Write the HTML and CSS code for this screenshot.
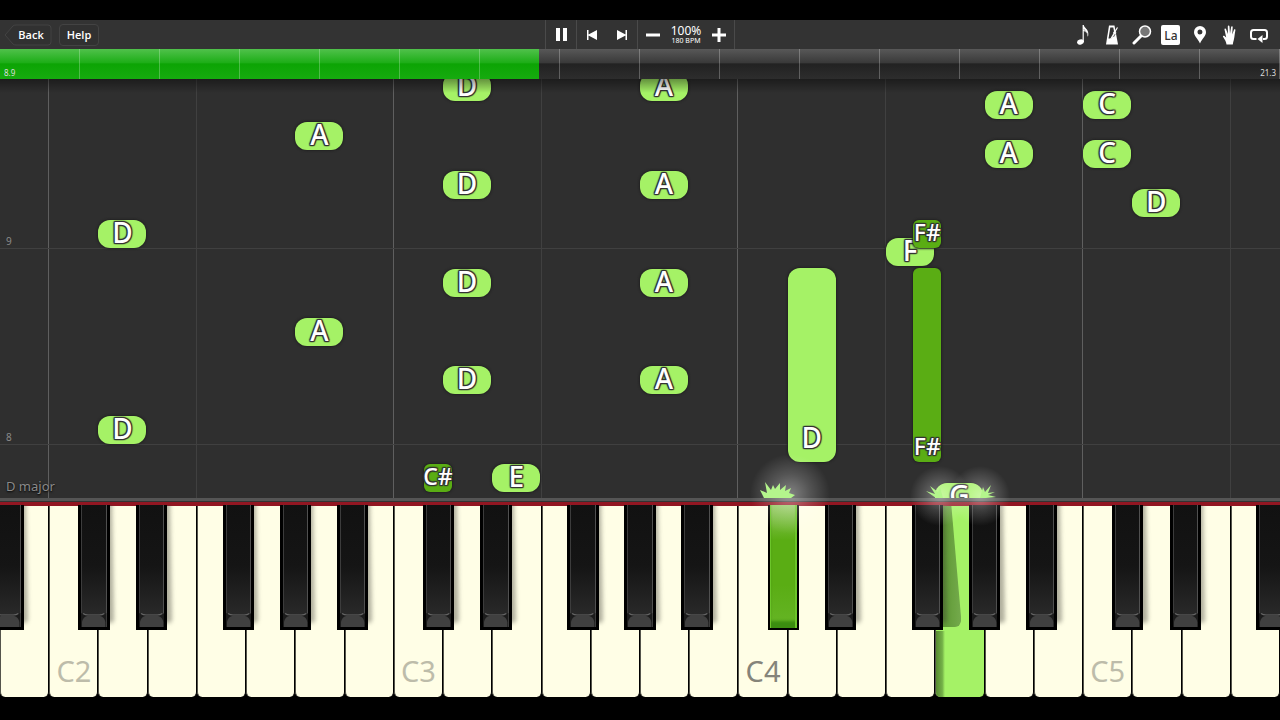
FILE: index.html
```html
<!DOCTYPE html>
<html lang="en">
<head>
  <meta charset="UTF-8">
  <meta name="viewport" content="width=device-width, initial-scale=1">
  <title>Piano Player</title>
  <link rel="stylesheet" href="styles.css">
</head>
<body>

<!-- TOOLBAR -->
<header class="toolbar">
  <nav class="menu">
    <button class="menu-btn back-btn">
      <svg class="back-shape" viewBox="0 0 48 22" aria-hidden="true"><path d="M1 11 L9 2 Q10 1 12 1 H44 Q47 1 47 4 V18 Q47 21 44 21 H12 Q10 21 9 20 Z"/></svg>
      <span>Back</span>
    </button>
    <button class="menu-btn help-btn">Help</button>
  </nav>

  <div class="transport">
    <div class="group">
      <button class="icon-btn" aria-label="Pause">
        <svg width="12" height="14" viewBox="0 0 12 14"><path d="M1 0h4v13H1zM8 0h4v13H8z"/></svg>
      </button>
    </div>
    <div class="group">
      <button class="icon-btn" aria-label="Previous">
        <svg width="12" height="10" viewBox="0 0 12 10"><path d="M1 0h1.500v4.500L11 0v10L2.500 5.500V10H1z"/></svg>
      </button>
      <button class="icon-btn" aria-label="Next">
        <svg width="12" height="10" viewBox="0 0 12 10"><path d="M11 0H9.500v4.500L1 0v10l8.500-4.500V10H11z"/></svg>
      </button>
    </div>
    <div class="group tempo">
      <button class="icon-btn" aria-label="Slower">
        <svg width="14" height="14" viewBox="0 0 14 14"><path d="M0 5.500h14v3H0z"/></svg>
      </button>
      <div class="tempo-value">
        <span class="percent">100%</span>
        <span class="bpm">180 BPM</span>
      </div>
      <button class="icon-btn" aria-label="Faster">
        <svg width="14" height="14" viewBox="0 0 14 14"><path d="M5.500 0h3v5.500H14v3H8.500V14h-3V8.500H0v-3h5.500z"/></svg>
      </button>
    </div>
  </div>

  <div class="tools">
    <button class="icon-btn" aria-label="Notes">
      <svg width="20" height="20" viewBox="0 0 20 20"><ellipse cx="7.500" cy="17" rx="3.500" ry="2.600" transform="rotate(-18 7.500 17)"/><path d="M9.600 0h1.200c.3 3 4.500 4 4.500 8.500 0 1.500-.5 2.600-1 3.300.6-2.700-.6-4.600-3.500-5.800V17H9.600z"/><path d="M10.800 4c.8 2.600 4.700 3.500 4.200 7" fill="none" stroke="#999" stroke-width=".8"/></svg>
    </button>
    <button class="icon-btn" aria-label="Metronome">
      <svg width="20" height="20" viewBox="0 0 20 20"><path d="M7 .5h5.500L16 19.500H4z"/><path d="M8.300 2.500h3l.9 5-2.500 6H6.500z" fill="#333"/><path d="M15.500 2.500 8.500 14.500" stroke="#fff" stroke-width="1.300"/><path d="M16.500 3 11.500 12" stroke="#333" stroke-width=".7"/><path d="m11.500 7 2.500 1.500" stroke="#fff" stroke-width="2"/></svg>
    </button>
    <button class="icon-btn" aria-label="Zoom">
      <svg width="20" height="20" viewBox="0 0 20 20"><path d="M9 11 2 18" stroke="#fff" stroke-width="3" stroke-linecap="round"/><circle cx="13" cy="6.500" r="5.500" fill="#777" stroke="#fff" stroke-width="1.500"/></svg>
    </button>
    <button class="icon-btn" aria-label="Note labels"><span class="la">La</span></button>
    <button class="icon-btn" aria-label="Bookmark">
      <svg width="20" height="20" viewBox="0 0 20 20"><path fill-rule="evenodd" d="M10 1a6 6 0 0 1 6 6c0 4-3.500 6-6 11.500C7.500 13 4 11 4 7a6 6 0 0 1 6-6zm0 3.500a2.500 2.500 0 1 0 0 5 2.500 2.500 0 0 0 0-5z"/></svg>
    </button>
    <button class="icon-btn" aria-label="Hands">
      <svg width="20" height="20" viewBox="0 0 20 20"><path d="M6.500 19.500C6.300 17 5 15 3 11.800c-.4-.9.8-1.500 1.500-.8l1.700 1.600L4.500 4.500c-.1-1 1.200-1.300 1.500-.4L7.900 9 7.800 1.500c0-1.200 1.600-1.200 1.700 0l.5 7.300 1.100-6.800c.2-1.100 1.700-.9 1.600.2l-.5 7.300 1.800-4.700c.4-.9 1.600-.5 1.400.5-1 5-.7 6.500-1.600 9.700-.4 1.500-.9 3-1 4.500z"/></svg>
    </button>
    <button class="icon-btn" aria-label="Loop">
      <svg width="20" height="20" viewBox="0 0 20 20"><path d="M7.500 14H4.500Q2 14 2 11.500V7.500Q2 5 4.500 5h11Q18 5 18 7.500v4q0 2.500-2.500 2.500H14" fill="none" stroke="#fff" stroke-width="2"/><path d="m8.500 14 5-4v8z"/></svg>
    </button>
  </div>
</header>

<!-- SONG POSITION -->
<div class="seek" role="progressbar" aria-label="Song position" aria-valuemin="0" aria-valuemax="21.3" aria-valuenow="8.9">
  <div class="seek-done" style="width: 42.1%"></div>
  <span class="seek-time">8.9</span>
  <span class="seek-time">21.3</span>
</div>

<main class="stage">
  <!-- FALLING NOTES -->
  <div class="roll" id="roll">
    <span class="song-key">D major</span>
  </div>

  <!-- KEYBOARD -->
  <div class="rail"></div>
  <div class="felt"></div>
  <div class="piano" id="piano">
    <div class="white-keys" id="whiteKeys"></div>
    <div class="black-keys" id="blackKeys"></div>
  </div>
</main>

<script>
  const WHITE_COUNT = 26;
  const FIRST_C = 1;   // the keyboard starts on B1

  // left edge of each black key, in white keys from C
  const blackOffsets = [0.59, 1.76, 3.52, 4.68, 5.84];

  // x = white key index, y = distance above the keyboard, h = length
  const notes = [
    { name: "D", x: 2, y: 54 },
    { name: "D", x: 2, y: 250 },
    { name: "A", x: 6, y: 152 },
    { name: "A", x: 6, y: 348 },
    { name: "D", x: 9, y: 104 },
    { name: "D", x: 9, y: 201 },
    { name: "D", x: 9, y: 299 },
    { name: "D", x: 9, y: 397 },
    { name: "A", x: 13, y: 104 },
    { name: "A", x: 13, y: 201 },
    { name: "A", x: 13, y: 299 },
    { name: "A", x: 13, y: 397 },
    { name: "C#", x: 8.61, y: 6, black: true },
    { name: "E", x: 10, y: 6 },
    { name: "D", x: 16, y: 36, h: 194 },
    { name: "F", x: 18, y: 232 },
    { name: "F#", x: 18.55, y: 250, black: true },
    { name: "F#", x: 18.55, y: 36, h: 194, black: true },
    { name: "G", x: 19, y: -13 },
    { name: "A", x: 20, y: 330 },
    { name: "A", x: 20, y: 379 },
    { name: "C", x: 22, y: 330 },
    { name: "C", x: 22, y: 379 },
    { name: "D", x: 23, y: 281 }
  ];

  const beats = [{ n: 8, y: 53 }, { n: 9, y: 249 }];
  const pressedWhite = 19;
  const pressedBlack = 15.59;

  const roll = document.getElementById("roll");
  const piano = document.getElementById("piano");
  const whiteKeys = document.getElementById("whiteKeys");
  const blackKeys = document.getElementById("blackKeys");

  function left(x) {
    return (x / WHITE_COUNT * 100).toFixed(3) + "%";
  }

  function add(parent, className, x, html = "") {
    const div = document.createElement("div");
    div.className = className;
    if (x !== null) div.style.left = left(x);
    div.innerHTML = html;
    parent.appendChild(div);
    return div;
  }

  // guide lines on every C and F
  for (let i = 0; i < WHITE_COUNT; i++) {
    const step = (i + 7 - FIRST_C) % 7;
    if (step === 0) add(roll, "line line-c", i);
    if (step === 3) add(roll, "line line-f", i);
  }

  beats.forEach(b => {
    add(roll, "beat", null, `<span>${b.n}</span>`).style.bottom = b.y + "px";
  });

  notes.forEach(n => {
    let name = "note";
    if (n.black) name += " note-black";
    else if (n.h) name += " note-long";
    const div = add(roll, name, n.x, `<span>${n.name}</span>`);
    div.style.bottom = n.y + "px";
    if (n.h) div.style.height = n.h + "px";
  });

  // white keys
  for (let i = 0; i < WHITE_COUNT; i++) {
    const isC = (i + 7 - FIRST_C) % 7 === 0;
    const octave = 2 + (i - FIRST_C) / 7;
    let name = "white-key";
    if (i === pressedWhite) name += " pressed";
    if (octave === 4) name += " middle-c";
    add(whiteKeys, name, null, isC ? `<span>C${octave}</span>` : "");
  }

  // black keys
  for (let c = FIRST_C - 7; c < WHITE_COUNT; c += 7) {
    blackOffsets.forEach(o => {
      const x = c + o;
      if (x < -0.6 || x > WHITE_COUNT) return;
      const pressed = Math.abs(x - pressedBlack) < 0.01;
      const cap = pressed ? "" : `<svg class="cap" viewBox="0 0 25 14" preserveAspectRatio="none"><path d="M0 0 4 2H21L25 0V14H0z" fill="#1b1b1b"/><path d="M1 14V9Q2 4 6 3H19Q23 4 24 9V14z" fill="#404040"/><path d="M2 .5Q4 2 7 2H18Q21 2 23 .5" fill="none" stroke="#666"/></svg>`;
      add(blackKeys, pressed ? "black-key pressed" : "black-key", x, `<div class="key-shadow"></div><div class="black-top">${cap}</div>`);
    });
  }

  // sparks and glow where a note meets its key
  const blades = `<path d="M4 16 0 8 7 11 5 0 11 8 13 3 15 7 20 1 20 8 26 3 25 9 31 6 29 11 35 13 31 16z"/>`;
  add(roll, "sparks", 15.43, `<svg width="36" height="16" viewBox="0 0 36 16">${blades}</svg>`);
  add(roll, "sparks", 18.8, `<svg width="70" height="16" viewBox="0 0 70 16"><path d="M10 16 0 9 9 12 4 4 12 10 14 5 17 16zM54 16 57 5 59 10 65 3 62 11 69 10 62 13 70 15 60 16z"/></svg>`);
  add(piano, "glow glow-big", 16.05);
  add(piano, "glow", 19.1);
  add(piano, "glow", 19.9);
</script>

</body>
</html>
```

FILE: styles.css
```css
* {
  box-sizing: border-box;
}

body {
  margin: 0;
  padding: 20px 0 24px;
  min-height: 100vh;
  display: flex;
  flex-direction: column;
  background: #000;
  color: white;
  font-family: "Noto Sans", "Open Sans", sans-serif;
  overflow-x: hidden;
}

button {
  margin: 0;
  padding: 0;
  background: none;
  border: none;
  color: inherit;
  font-family: inherit;
  cursor: pointer;
}

svg {
  display: block;
  fill: white;
}

/* toolbar */
.toolbar {
  height: 29px;
  display: grid;
  grid-template-columns: 1fr auto 1fr;
  background: #333;
}

.menu {
  display: flex;
  align-items: center;
  gap: 7px;
  padding-left: 4px;
}

.menu-btn {
  height: 22px;
  font-family: "Open Sans", sans-serif;
  font-size: 11px;
  font-weight: 600;
}

.back-btn {
  display: grid;
  width: 48px;
  align-items: center;
}

.back-btn > * {
  grid-area: 1 / 1;
}

.back-btn span {
  padding-left: 6px;
}

.back-shape path {
  fill: #313131;
  stroke: #434343;
}

.help-btn {
  width: 40px;
  border: 1px solid #434343;
  border-radius: 4px;
  background: #313131;
}

.transport {
  display: flex;
}

.group {
  display: flex;
  align-items: center;
  border-left: 1px solid #4a4a4a;
}

.icon-btn {
  width: 30px;
  height: 29px;
  display: flex;
  align-items: center;
  justify-content: center;
}

.tempo {
  border-right: 1px solid #4a4a4a;
}

.tempo-value {
  width: 36px;
  display: flex;
  flex-direction: column;
  align-items: center;
  white-space: nowrap;
}

.percent {
  font-size: 12px;
  line-height: 13px;
}

.bpm {
  font-size: 7px;
  line-height: 8px;
}

.tools {
  width: 206px;
  justify-self: end;
  margin-right: 6px;
  display: grid;
  grid-template-columns: repeat(7, 1fr);
}

.tools .icon-btn {
  width: auto;
}

.la {
  width: 19px;
  height: 20px;
  border-radius: 2px;
  background: white;
  color: #333;
  font-size: 12px;
  font-weight: 500;
  line-height: 22px;
}

/* song position */
.seek {
  height: 30px;
  display: flex;
  position: relative;
  align-items: flex-end;
  justify-content: space-between;
  padding: 0 4px 1px;
  background: linear-gradient(#585858, #3a3a3a 45%, #222 50%, #2d2d2d);
}

.seek-done {
  position: absolute;
  top: 0;
  bottom: 0;
  left: 0;
  background: linear-gradient(#50c14b, #1eae18 45%, #0ca404 50%, #16ab0f);
}

/* one tick every 1/16 of the song */
.seek::after {
  content: "";
  position: absolute;
  inset: 0;
  background: linear-gradient(to left, rgba(255, 255, 255, 0.25) 1px, transparent 1px) 0 0 / 6.25% 100%;
}

.seek-time {
  position: relative;
  color: #ddd;
  font-size: 8px;
  line-height: 10px;
}

/* falling notes */
.stage {
  flex: 1;
  display: flex;
  flex-direction: column;
}

.roll {
  flex: 1;
  min-height: 419px;
  position: relative;
  overflow: hidden;
  background: #2f2f2f;
}

.roll::before {
  content: "";
  position: absolute;
  inset: 0 0 auto 0;
  z-index: 2;
  height: 14px;
  background: linear-gradient(rgba(0, 0, 0, 0.4), transparent);
}

.line {
  position: absolute;
  top: 0;
  bottom: 0;
  width: 1px;
  margin-left: -1px;
}

.line-c {
  background: #5f5f5f;
}

.line-f {
  background: #404040;
}

.beat {
  position: absolute;
  left: 0;
  right: 0;
  border-top: 1px solid #404040;
}

.beat span {
  position: absolute;
  left: 6px;
  bottom: 2px;
  color: #8a8a8a;
  font-size: 10px;
  line-height: 12px;
}

.song-key {
  position: absolute;
  left: 6px;
  bottom: 4px;
  z-index: 1;
  color: #8a8a8a;
  font-size: 13px;
  line-height: 16px;
  text-shadow: 0 1px 2px #000;
}

.note {
  position: absolute;
  width: 3.75%;
  height: 28px;
  display: flex;
  align-items: flex-end;
  justify-content: center;
  background: #a5f266;
  border-radius: 12px;
  box-shadow: 0 0 2px 1px #222;
  color: white;
  font-size: 28px;
  font-weight: 500;
  line-height: 30px;
  text-shadow: 1px 0 1px #333, -1px 0 1px #333, 0 1px 1px #333, 0 -1px 1px #333, 1px 1px 1px #333, -1px -1px 1px #333, 1px -1px 1px #333, -1px 1px 1px #333;
}

.note span {
  padding-bottom: 1px;
}

.note-long span {
  padding-bottom: 10px;
}

.note-black {
  width: 2.2%;
  background: #5aad14;
  border-radius: 6px;
  font-size: 23px;
}

/* keyboard */
.rail {
  height: 4px;
  background: #555;
  border-bottom: 1px solid #333;
}

.felt {
  height: 4px;
  background: #921622;
}

.piano {
  position: relative;
  height: 190px;
}

.white-keys {
  height: 100%;
  display: grid;
  grid-template-columns: repeat(26, 1fr);
}

.white-key {
  display: flex;
  align-items: flex-end;
  justify-content: center;
  padding-bottom: 6px;
  background: #fffee6;
  border: solid #000;
  border-width: 0 1px 0 0;
  border-left: 1px solid #55554c;
  border-radius: 0 0 5px 5px;
  color: #bdbcaa;
  font-size: 29px;
  line-height: 40px;
}

.middle-c {
  color: #85847a;
}

.white-key.pressed {
  position: relative;
  height: 191px;
  overflow: hidden;
  background: #a5f266;
}

/* the neighbours' shadows on the lowered key */
.white-key.pressed::before {
  content: "";
  position: absolute;
  top: 0;
  left: 0;
  width: 25px;
  height: 121px;
  border-radius: 0 0 6px 0;
  background: linear-gradient(to right, #5f9a35 8px, #74aa4c);
  clip-path: polygon(0 0, 60% 0, 100% 95%, 90% 100%, 0 100%);
}

.white-key.pressed::after {
  content: "";
  position: absolute;
  top: 125px;
  bottom: 0;
  left: 0;
  width: 9px;
  background: linear-gradient(to right, #578a30, #74b048 70%, #a5f266);
}

.black-keys {
  position: absolute;
  inset: -1px 0 auto 0;
  height: 125px;
  overflow: hidden;
}

.black-key {
  position: absolute;
  width: 2.45%;
  height: 125px;
}

/* shadow cast on the white keys */
.key-shadow {
  position: absolute;
  top: -4px;
  left: 50%;
  width: 19px;
  height: 122px;
  background: rgba(60, 60, 50, 0.4);
  border-radius: 0 0 4px 0;
  filter: blur(2px);
  transform: skewX(1deg);
}

.black-top {
  position: relative;
  height: 100%;
  display: flex;
  align-items: flex-end;
  border: solid #000;
  border-width: 0 3px 3px;
  box-shadow: inset 1px 0 #3c3c3c, inset -1px 0 #505050;
  background: linear-gradient(#111, #151515 50%, #292929 90%);
}

.cap {
  width: 100%;
  height: 14px;
}

.black-key.pressed .key-shadow {
  display: none;
}

.black-key.pressed .black-top {
  border-width: 0 2px 2px;
  box-shadow: inset 1px 0 #6cc52a, inset -2px 0 #6cc52a, inset 0 -7px 3px #3b8d10;
  background: linear-gradient(#91c85e, #5aad14 35px, #5aad14 65%, #66b526);
}

.sparks {
  position: absolute;
  bottom: 0;
  z-index: 2;
}

.sparks svg {
  fill: #b4f58c;
}

.glow {
  position: absolute;
  top: -40px;
  width: 60px;
  height: 60px;
  margin-left: -30px;
  background: radial-gradient(closest-side, rgba(255, 255, 255, 0.4), rgba(255, 255, 255, 0.18) 50%, transparent);
  pointer-events: none;
}

.glow-big {
  top: -52px;
  width: 80px;
  height: 80px;
  margin-left: -40px;
}
```
